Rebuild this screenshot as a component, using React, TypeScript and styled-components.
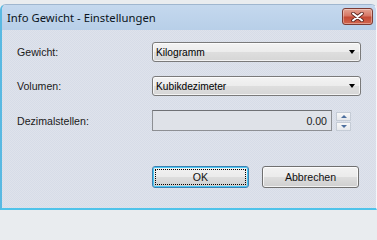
import React from 'react';
import styled, {createGlobalStyle} from 'styled-components';

const GlobalStyle = createGlobalStyle`
  html, body {
    margin: 0;
    padding: 0;
    background: #e9ecef;
    width: 377px;
    height: 210px;
    overflow: hidden;
  }
`;

const Window = styled.div`
  margin-top: 4px;
  width: 377px;
  height: 206px;
  box-sizing: border-box;
  border-radius: 6px 6px 0 0;
  border-left: 2px solid #59b9e2;
  border-bottom: 2px solid #4fc3ea;
  border-right: 1px solid #f4f7fb;
  border-top: 1px solid #9fb6cf;
  display: flex;
  flex-direction: column;
  overflow: hidden;
  font-family: "Liberation Sans", Arial, sans-serif;
  font-size: 11px;
  color: #000;
`;

const TitleBar = styled.div`
  height: 25px;
  flex: none;
  display: flex;
  align-items: center;
  justify-content: space-between;
  padding: 0 3px 0 5px;
  background: linear-gradient(#c4d8ee, #b8cfe8);
`;

const Title = styled.span`
  font-family: "Noto Sans", "DejaVu Sans", sans-serif;
  font-size: 11.3px;
  color: #0b1522;
  margin-top: -1px;
`;

const CloseButton = styled.div`
  width: 29px;
  height: 15px;
  border: 1px solid #7c3b33;
  border-radius: 3px;
  background: linear-gradient(#e4a393 0%, #d77765 45%, #c44a35 55%, #d2664e 100%);
  box-shadow: inset 0 0 0 1px rgba(255, 255, 255, 0.35);
  display: flex;
  align-items: center;
  justify-content: center;
  margin-top: -2px;
`;

const Body = styled.div`
  flex: 1;
  background-color: #d6dce8;
  background-image: conic-gradient(#dfe3eb 25%, transparent 0 50%, #dfe3eb 0 75%, transparent 0);
  background-size: 2px 2px;
  padding: 12px 15px 0 15px;
`;

const Form = styled.div`
  display: grid;
  grid-template-columns: 135px 209px;
  row-gap: 14px;
  align-items: center;
`;

const Label = styled.span`
  font-size: 10.6px;
  color: #1a1a1a;
`;

const Combo = styled.div`
  height: 20px;
  box-sizing: border-box;
  border: 1px solid #7a7a7a;
  border-radius: 3px;
  background: linear-gradient(#f3f3f3 0%, #ececec 50%, #dedede 51%, #d6d6d6 100%);
  box-shadow: inset 0 0 0 1px rgba(255, 255, 255, 0.7);
  display: flex;
  align-items: center;
  justify-content: space-between;
  padding: 0 5px 0 3px;
  font-size: 10.2px;
`;

const Arrow = styled.span`
  width: 0;
  height: 0;
  border-left: 3.5px solid transparent;
  border-right: 3.5px solid transparent;
  border-top: 4px solid #000;
`;

const NumberRow = styled.div`
  display: flex;
  align-items: center;
  gap: 4px;
`;

const NumberInput = styled.div`
  width: 180px;
  height: 21px;
  box-sizing: border-box;
  border: 1px solid #8d8f93;
  border-top-color: #6f7175;
  background: #dfe2e8;
  display: flex;
  align-items: center;
  justify-content: flex-end;
  padding-right: 4px;
  font-size: 10.6px;
  color: #222;
`;

const Spinner = styled.div`
  display: flex;
  flex-direction: column;
  gap: 1px;
  margin-top: 1px;
`;

const SpinButton = styled.div<{$down?: boolean}>`
  width: 15px;
  height: 9px;
  box-sizing: border-box;
  border: 1px solid #c5ccd6;
  background: linear-gradient(#f8f8f8, #e6e8ec);
  display: flex;
  align-items: center;
  justify-content: center;

  &::after {
    content: '';
    width: 0;
    height: 0;
    border-left: 3px solid transparent;
    border-right: 3px solid transparent;
    ${p => p.$down ? 'border-top: 3px solid #4d6f9e;' : 'border-bottom: 3px solid #4d6f9e;'}
  }
`;

const ButtonRow = styled.div`
  display: grid;
  grid-template-columns: 135px 209px;
  margin-top: 35px;
`;

const Buttons = styled.div`
  display: flex;
  gap: 13px;
`;

const Button = styled.div<{$default?: boolean}>`
  position: relative;
  width: 97px;
  height: 22px;
  box-sizing: border-box;
  border: 1px solid ${p => p.$default ? '#3c7fb1' : '#707070'};
  border-radius: 3px;
  background: linear-gradient(#f2f2f2 0%, #ebebeb 50%, #dddddd 51%, #cfcfcf 100%);
  box-shadow: inset 0 0 0 1px ${p => p.$default ? '#48c8f5' : 'rgba(255, 255, 255, 0.75)'};
  display: flex;
  align-items: center;
  justify-content: center;
  font-size: 10.6px;
  color: #111;

  &::before {
    content: '';
    display: ${p => p.$default ? 'block' : 'none'};
    position: absolute;
    inset: 2px;
    border: 1px dotted #000;
  }
`;

const App: React.FC = () => {
    return (
        <>
            <GlobalStyle/>
            <Window>
                <TitleBar>
                    <Title>Info Gewicht - Einstellungen</Title>
                    <CloseButton>
                        <svg width="13" height="10" viewBox="0 0 13 10">
                            <path d="M2 1.5 L11 8.5 M11 1.5 L2 8.5" stroke="#5a2620" strokeWidth="3.6" strokeLinecap="round"/>
                            <path d="M2 1.5 L11 8.5 M11 1.5 L2 8.5" stroke="#fff" strokeWidth="2" strokeLinecap="round"/>
                        </svg>
                    </CloseButton>
                </TitleBar>
                <Body>
                    <Form>
                        <Label>Gewicht:</Label>
                        <Combo>Kilogramm<Arrow/></Combo>
                        <Label>Volumen:</Label>
                        <Combo>Kubikdezimeter<Arrow/></Combo>
                        <Label>Dezimalstellen:</Label>
                        <NumberRow>
                            <NumberInput>0.00</NumberInput>
                            <Spinner>
                                <SpinButton/>
                                <SpinButton $down/>
                            </Spinner>
                        </NumberRow>
                    </Form>
                    <ButtonRow>
                        <span/>
                        <Buttons>
                            <Button $default>OK</Button>
                            <Button>Abbrechen</Button>
                        </Buttons>
                    </ButtonRow>
                </Body>
            </Window>
        </>
    );
};

export default App;
